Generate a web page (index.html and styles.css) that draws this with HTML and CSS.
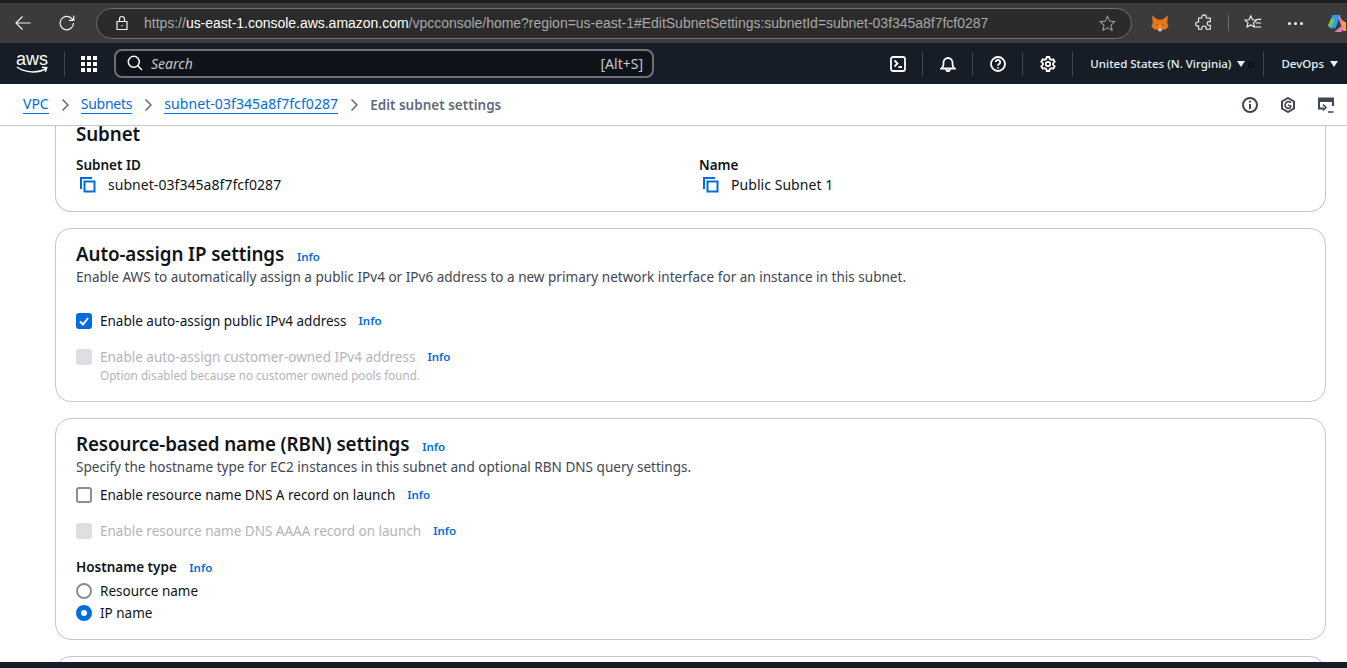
FILE: index.html
```html
<!DOCTYPE html>
<html lang="en">
<head>
  <meta charset="UTF-8" />
  <title>Edit subnet settings</title>
  <link rel="stylesheet" href="styles.css">
</head>
<body>

  <div class="browser-bar">
    <svg class="ico back" viewBox="0 0 20 20"><path d="M17.500 10H3M9.500 3.500 3 10l6.500 6.500"/></svg>
    <svg class="ico reload" viewBox="0 0 20 20"><path d="M16.500 10a6.700 6.700 0 1 1-2-4.700l2 2M16.800 2.600v4.800H12"/></svg>
    <div class="address">
      <svg class="ico lock" viewBox="0 0 16 16"><path d="M3 6.500h10v8H3zM5.500 6.500V4a2.500 2.500 0 0 1 5 0v2.500"/><path d="M8 10v1.200"/></svg>
      <span class="url">https://<b>us-east-1.console.aws.amazon.com</b>/vpcconsole/home?region=us-east-1#EditSubnetSettings:subnetId=subnet-03f345a8f7fcf0287</span>
      <svg class="ico star" viewBox="0 0 20 20"><path d="m10 2.500 2.300 5 5.400.6-4 3.700 1.100 5.400L10 14.500l-4.800 2.700 1.100-5.400-4-3.700 5.400-.6z"/></svg>
    </div>
    <svg class="fox" viewBox="0 0 20 18"><path fill="#e2761b" d="M1 0l6.500 4.500h5L19 0l-1 8 1.500 4.500-4 3.500-3-.5h-5l-3 .5-4-3.500L2 8z"/><path fill="#f6851b" d="M4.500 8l3.500 1.500L7 13zM15.500 8 12 9.500l1 3.500zM8 9.500h4l.5 5h-5z"/><path fill="#233447" d="M6.500 9.500l1.500 1.200-2 .6zM13.500 9.500 12 10.700l2 .6z"/><path fill="#d7c1b3" d="M7.500 14.500h5l-.7 3h-3.600z"/></svg>
    <svg class="ico puzzle" viewBox="0 0 20 20"><path d="M7.500 3.500a2.500 2.500 0 0 1 5 0V4.500H17v4h-1.500a2 2 0 0 0 0 4H17v4.500h-4.500v-1.200a2.500 2.500 0 0 0-5 0V17H4v-3.500H3a2.300 2.300 0 0 1 0-4.600h1V4.500h3.500z"/></svg>
    <i class="bar-sep"></i>
    <svg class="ico favs" viewBox="0 0 20 20"><path d="m7.500 2 1.900 4.300 4.600.5-3.400 3.100 1 4.600-4.100-2.300-4.100 2.300 1-4.600L1 6.800l4.600-.5zM14 6h5M13 10h6M12.500 14.500H19"/></svg>
    <span class="dots"><i></i><i></i><i></i></span>
    <svg class="copilot" viewBox="0 0 20 20"><path fill="#2f9cf0" d="M6 1h8L9 15H3L1 12z"/><path fill="#7ac943" d="M1 12 5 4l3 2-3 8z"/><path fill="#f472b6" d="M13 1l6 12-4 6H8l3-3 4-3-3-9z"/><path fill="#f59e42" d="M15 6l5 3v9h-3z"/></svg>
  </div>

  <nav class="top-nav">
    <div class="aws-logo">
      <span>aws</span>
      <svg viewBox="0 0 32 8"><path d="M1 1c8 6 21 6.500 29 1.500M26 1.200l4.700.4-1.400 4.200"/></svg>
    </div>
    <i class="nav-sep"></i>
    <svg class="grid-ico" viewBox="0 0 16 16"><path d="M0 0h4v4H0zM6 0h4v4H6zM12 0h4v4h-4zM0 6h4v4H0zM6 6h4v4H6zM12 6h4v4h-4zM0 12h4v4H0zM6 12h4v4H6zM12 12h4v4h-4z"/></svg>
    <div class="search">
      <svg class="ico" viewBox="0 0 16 16"><circle cx="6.800" cy="6.800" r="5.500"/><path d="m11 11 4 4"/></svg>
      <em>Search</em>
      <span>[Alt+S]</span>
    </div>
    <div class="nav-right">
      <svg class="ico nav-ico" viewBox="0 0 16 16"><rect x="1" y="1" width="14" height="14" rx="2"/><path d="m4.500 4.500 3 3-3 3M8.500 11H12"/></svg>
      <i class="nav-sep"></i>
      <svg class="ico nav-ico" viewBox="0 0 16 16"><path d="M1.500 12.500c1.500-1 2-2.500 2-6a4.500 4.500 0 0 1 9 0c0 3.500.5 5 2 6zM6.300 12.500v1a1.700 1.700 0 0 0 3.400 0v-1"/></svg>
      <i class="nav-sep"></i>
      <svg class="ico nav-ico" viewBox="0 0 16 16"><circle cx="8" cy="8" r="7"/><path d="M5.800 6a2.200 2.200 0 1 1 3.300 2c-.8.5-1.100 1-1.100 1.800M8 11.200v1.300"/></svg>
      <i class="nav-sep"></i>
      <svg class="ico nav-ico" viewBox="0 0 16 16"><circle cx="8" cy="8" r="2.200"/><path d="m6.700 1-.4 2-1.600.9-2-.6L1.300 5.700l1.500 1.400v1.800l-1.500 1.400 1.400 2.400 2-.6 1.600.9.400 2h2.600l.4-2 1.600-.9 2 .6 1.400-2.400-1.500-1.400V7.100l1.500-1.400-1.400-2.400-2 .6-1.600-.9-.4-2z"/></svg>
      <i class="nav-sep"></i>
      <span class="nav-text region">United States (N. Virginia)<i class="caret"></i><i class="dark-dot"></i></span>
      <i class="nav-sep"></i>
      <span class="nav-text">DevOps<i class="caret"></i></span>
    </div>
  </nav>

  <div class="breadcrumbs">
    <a href="#">VPC</a>
    <svg class="crumb-arrow" viewBox="0 0 8 14"><path d="m1.500 1.500 5.500 5.500-5.500 5.500"/></svg>
    <a class="crumb-tight" href="#">Subnets</a>
    <svg class="crumb-arrow" viewBox="0 0 8 14"><path d="m1.500 1.500 5.500 5.500-5.500 5.500"/></svg>
    <a class="crumb-wide" href="#">subnet-03f345a8f7fcf0287</a>
    <svg class="crumb-arrow" viewBox="0 0 8 14"><path d="m1.500 1.500 5.500 5.500-5.500 5.500"/></svg>
    <strong>Edit subnet settings</strong>
    <div class="crumb-tools">
      <svg class="ico" viewBox="0 0 16 16"><circle cx="8" cy="8" r="7"/><path d="M8 7v5M8 3.800v1.800"/></svg>
      <svg class="ico" viewBox="0 0 16 16"><path d="M8 1l6 3.500v7L8 15l-6-3.500v-7z"/><path class="thin" d="M11 5.700A3.400 3.400 0 1 0 11 10.300M8 8l3.500 1.500"/></svg>
      <svg class="ico" viewBox="0 0 16 16"><path d="M6 11.500H1V1.500h14V9"/><path class="fat" d="M1 3.500h14"/><path class="thin" d="M5 7.500l3 3-3 3M10 15h5.500"/></svg>
    </div>
  </div>

  <main class="content">
    <section class="card card-first">
      <h2>Subnet</h2>
      <div class="two-col">
        <div>
          <div class="label">Subnet ID</div>
          <div class="copy-row">
            <svg class="copy-ico" viewBox="0 0 16 16"><path d="M1 12V1h11"/><path d="M4.500 4.500h10v10h-10z"/></svg>
            subnet-03f345a8f7fcf0287
          </div>
        </div>
        <div>
          <div class="label">Name</div>
          <div class="copy-row">
            <svg class="copy-ico" viewBox="0 0 16 16"><path d="M1 12V1h11"/><path d="M4.500 4.500h10v10h-10z"/></svg>
            Public Subnet 1
          </div>
        </div>
      </div>
    </section>

    <section class="card card-ip">
      <h2>Auto-assign IP settings <a class="info" href="#">Info</a></h2>
      <p class="desc">Enable AWS to automatically assign a public IPv4 or IPv6 address to a new primary network interface for an instance in this subnet.</p>
      <div class="check-row first-check">
        <span class="box checked"><svg viewBox="0 0 12 12"><path d="m2 6.500 3 3 5-6.500"/></svg></span>
        Enable auto-assign public IPv4 address <a class="info" href="#">Info</a>
      </div>
      <div class="check-row disabled">
        <span class="box"></span>
        Enable auto-assign customer-owned IPv4 address <a class="info" href="#">Info</a>
      </div>
      <div class="hint">Option disabled because no customer owned pools found.</div>
    </section>

    <section class="card card-rbn">
      <h2>Resource-based name (RBN) settings <a class="info" href="#">Info</a></h2>
      <p class="desc">Specify the hostname type for EC2 instances in this subnet and optional RBN DNS query settings.</p>
      <div class="check-row">
        <span class="box"></span>
        Enable resource name DNS A record on launch <a class="info" href="#">Info</a>
      </div>
      <div class="check-row disabled">
        <span class="box"></span>
        Enable resource name DNS AAAA record on launch <a class="info" href="#">Info</a>
      </div>
      <div class="label host-label">Hostname type <a class="info" href="#">Info</a></div>
      <div class="radio-row"><span class="radio"></span>Resource name</div>
      <div class="radio-row"><span class="radio on"></span>IP name</div>
    </section>

    <section class="card card-cut"></section>
  </main>

  <div class="bottom-strip"></div>

</body>
</html>
```

FILE: styles.css
```css
* {
  box-sizing: border-box;
}

html, body {
  height: 668px;
  overflow: hidden;
}

body {
  margin: 0;
  font-family: "Noto Sans", "Open Sans", sans-serif;
  font-size: 14px;
  color: #0f141a;
  background: #fff;
  display: flex;
  flex-direction: column;
}

svg {
  flex: none;
}

.ico {
  fill: none;
  stroke: currentColor;
  stroke-width: 1.6;
}

/* browser chrome */
.browser-bar {
  height: 43px;
  background: #3b3b3b;
  border-top: 3px solid #1f1f1f;
  color: #f2f2f2;
  display: flex;
  align-items: center;
  flex: none;
}

.back {
  width: 20px;
  height: 20px;
  margin-left: 13px;
  stroke-width: 1.2;
}

.reload {
  width: 20px;
  height: 20px;
  margin-left: 24px;
  stroke-width: 1.2;
}

.address {
  width: 1036px;
  height: 31px;
  margin-left: 19px;
  padding: 0 14px 0 17px;
  background: #2b2b2b;
  border: 1px solid #6f6f6f;
  border-radius: 16px;
  display: flex;
  align-items: center;
}

.lock {
  width: 16px;
  height: 16px;
  stroke-width: 1.2;
}

.url {
  margin-left: 14px;
  flex: 1;
  font-family: "Liberation Sans", sans-serif;
  font-size: 14px;
  letter-spacing: -0.02px;
  color: #a8a8a8;
  white-space: nowrap;
  overflow: hidden;
}

.url b {
  font-weight: normal;
  color: #fff;
}

.star {
  width: 19px;
  height: 19px;
  color: #a0a0a0;
  stroke-width: 1.1;
}

.fox {
  width: 18px;
  height: 17px;
  margin-left: 19px;
}

.puzzle {
  width: 18px;
  height: 18px;
  margin-left: 26px;
  stroke-width: 1.2;
}

.bar-sep {
  width: 1px;
  height: 16px;
  margin-left: 15px;
  background: #6a6a6a;
}

.favs {
  width: 18px;
  height: 18px;
  margin-left: 15px;
  stroke-width: 1.2;
}

.dots {
  margin-left: 26px;
  display: flex;
  gap: 3px;
}

.dots i {
  width: 3px;
  height: 3px;
  background: #f2f2f2;
  border-radius: 50%;
}

.copilot {
  width: 19px;
  height: 19px;
  margin-left: 24px;
}

/* aws nav */
.top-nav {
  height: 41px;
  background: #161d26;
  color: #fff;
  display: flex;
  align-items: center;
  flex: none;
}

.aws-logo {
  width: 32px;
  margin-left: 16px;
  display: flex;
  flex-direction: column;
  align-items: center;
  line-height: 13px;
}

.aws-logo span {
  font-size: 18px;
  font-family: "Liberation Sans", sans-serif;
}

.aws-logo svg {
  width: 32px;
  height: 8px;
  fill: none;
  stroke: #fff;
  stroke-width: 1.5;
}

.nav-sep {
  width: 1px;
  height: 24px;
  background: #414750;
  display: block;
  flex: none;
}

.top-nav > .nav-sep {
  margin: 0 16px;
}

.grid-ico {
  width: 16px;
  height: 16px;
  fill: #fff;
}

.search {
  width: 540px;
  height: 29px;
  margin-left: 17px;
  padding: 0 9px 1px 11px;
  background: #0f141a;
  border: 2px solid #70707a;
  border-radius: 8px;
  display: flex;
  align-items: center;
  color: #c6c6cd;
}

.search .ico {
  width: 16px;
  height: 16px;
  color: #fff;
  stroke-width: 1.5;
}

.search em {
  margin-left: 8px;
  flex: 1;
  font-size: 14px;
}

.nav-right {
  margin-left: auto;
  display: flex;
  align-items: center;
  padding-right: 9px;
}

.nav-right .nav-sep {
  margin: 0 17px 0 16px;
}

.nav-ico {
  width: 16px;
  height: 16px;
  stroke-width: 1.8;
}

.nav-text {
  font-size: 11.500px;
  font-weight: 500;
  color: #e8f1fb;
  display: flex;
  align-items: center;
}

.region {
  position: relative;
  margin-right: 2px;
}

.caret {
  width: 0;
  height: 0;
  margin-left: 6px;
  border-left: 4px solid transparent;
  border-right: 4px solid transparent;
  border-top: 6px solid #e8f1fb;
}

.dark-dot {
  position: absolute;
  right: -9px;
  top: 6px;
  width: 6px;
  height: 6px;
  border: 1px solid #05070a;
  border-radius: 50%;
}

/* breadcrumbs */
.breadcrumbs {
  height: 42px;
  padding: 0 13px 0 23px;
  background: #fff;
  border-bottom: 1px solid #c6c6cd;
  display: flex;
  align-items: center;
  flex: none;
}

.breadcrumbs a {
  color: #006ce0;
  text-decoration: none;
  border-bottom: 1px solid #006ce0;
  line-height: 18px;
}

.breadcrumbs .crumb-tight {
  letter-spacing: -0.25px;
}

.breadcrumbs .crumb-wide {
  letter-spacing: 0.08px;
}

.breadcrumbs strong {
  color: #5f6b7a;
  font-size: 13.500px;
  font-weight: 600;
}

.crumb-arrow {
  width: 8px;
  height: 14px;
  margin: 0 12px;
  fill: none;
  stroke: #656871;
  stroke-width: 1.5;
}

.crumb-tools {
  margin-left: auto;
  display: flex;
  gap: 22px;
  color: #424650;
}

.crumb-tools .ico {
  width: 16px;
  height: 16px;
  stroke-width: 2;
}

.crumb-tools .fat {
  stroke-width: 3;
}

.crumb-tools .thin {
  stroke-width: 1.6;
}

/* cards */
.content {
  flex: 1;
  min-height: 0;
  padding: 0 21px 0 55px;
}

.card {
  border: 1px solid #c6c6cd;
  border-radius: 16px;
  padding: 0 20px;
  margin-bottom: 16px;
}

.card-first {
  height: 86px;
  border-top: 0;
  border-top-left-radius: 0;
  border-top-right-radius: 0;
}

.card-ip {
  height: 174px;
  padding-top: 12px;
}

.card-rbn {
  height: 222px;
  padding-top: 12px;
}

.card-cut {
  height: 40px;
}

h2 {
  margin: 0;
  font-size: 18.800px;
  font-weight: 600;
  line-height: 26px;
  letter-spacing: -0.1px;
}

.card-first h2 {
  line-height: 17px;
}

.info {
  margin-left: 8px;
  font-size: 11.500px;
  font-weight: 600;
  line-height: 1;
  letter-spacing: 0;
  color: #006ce0;
  text-decoration: none;
}

.desc {
  margin: 0;
  font-size: 13.550px;
  line-height: 20px;
  color: #424650;
}

.two-col {
  margin-top: 12px;
  display: grid;
  grid-template-columns: 623px 1fr;
}

.label {
  font-size: 13.500px;
  font-weight: 600;
  line-height: 20px;
}

.copy-row {
  height: 20px;
  font-size: 14px;
  letter-spacing: 0.05px;
  line-height: 20px;
  display: flex;
  align-items: center;
}

.copy-ico {
  width: 16px;
  height: 16px;
  margin: 0 12px 0 4px;
  fill: none;
  stroke: #006ce0;
  stroke-width: 2;
}

.check-row {
  height: 20px;
  margin-bottom: 16px;
  font-size: 13.500px;
  line-height: 20px;
  display: flex;
  align-items: center;
}

.check-row .info {
  margin-left: 12px;
}

.first-check {
  margin-top: 24px;
}

.card-rbn .desc {
  margin-bottom: 8px;
}

.box {
  width: 16px;
  height: 16px;
  margin-right: 8px;
  border: 2px solid #8c8c94;
  border-radius: 3px;
  flex: none;
}

.box.checked {
  background: #006ce0;
  border-color: #006ce0;
  display: flex;
}

.box.checked svg {
  width: 12px;
  height: 12px;
  fill: none;
  stroke: #fff;
  stroke-width: 2;
}

.disabled {
  color: #b4b4bb;
}

.disabled .box {
  background: #dedee3;
  border-color: #dedee3;
}

.hint {
  margin: -16px 0 0 24px;
  font-size: 11.700px;
  line-height: 16px;
  color: #b4b4bb;
}

.host-label {
  margin-bottom: 3px;
}

.host-label .info {
  margin-left: 9px;
}

.radio-row {
  height: 22px;
  font-size: 13.500px;
  display: flex;
  align-items: center;
}

.radio {
  width: 16px;
  height: 16px;
  margin-right: 8px;
  border: 2px solid #8c8c94;
  border-radius: 50%;
  flex: none;
}

.radio.on {
  border: 5px solid #006ce0;
}

.bottom-strip {
  height: 6px;
  background: #161d26;
  flex: none;
}
```
